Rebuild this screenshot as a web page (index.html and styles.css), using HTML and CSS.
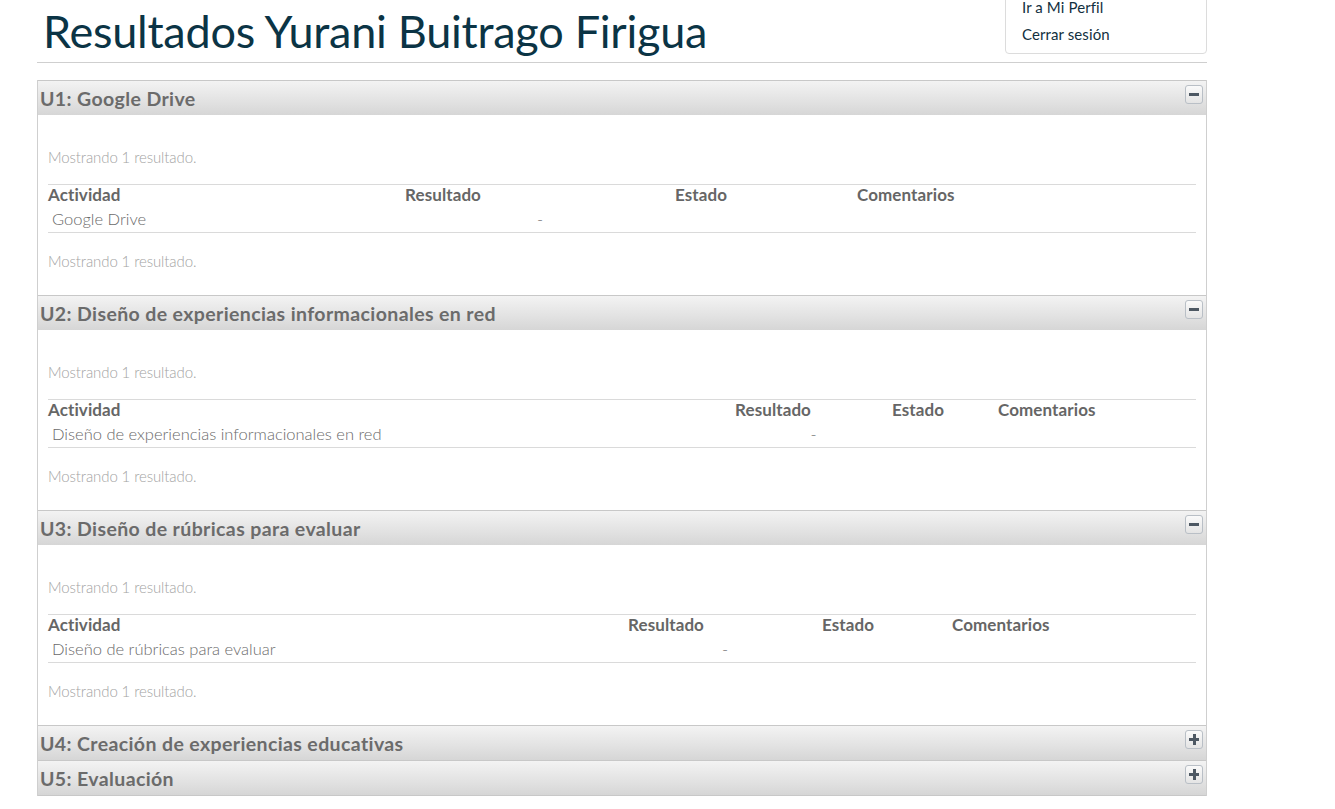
FILE: index.html
```html
<!DOCTYPE html>
<html lang="es">
<head>
<meta charset="utf-8">
<title>Resultados</title>
<link rel="stylesheet" href="styles.css">
</head>
<body>
<div class="page">
  <div class="user-menu">
    <a href="#" class="menu-item">Ir a Mi Perfil</a>
    <a href="#" class="menu-item">Cerrar sesión</a>
  </div>
  <h1 class="title">Resultados Yurani Buitrago Firigua</h1>

  <div class="accordion">
    <section class="panel">
      <div class="panel-head"><span class="panel-title">U1: Google Drive</span><span class="toggle minus"></span></div>
      <div class="panel-body">
        <p class="summary">Mostrando 1 resultado.</p>
        <table class="grid g1">
          <thead><tr><th class="c1">Actividad</th><th class="c2">Resultado</th><th class="c3">Estado</th><th class="c4">Comentarios</th></tr></thead>
          <tbody><tr><td class="act">Google Drive</td><td class="res">-</td><td></td><td></td></tr></tbody>
        </table>
        <p class="summary after">Mostrando 1 resultado.</p>
      </div>
    </section>

    <section class="panel">
      <div class="panel-head"><span class="panel-title">U2: Diseño de experiencias informacionales en red</span><span class="toggle minus"></span></div>
      <div class="panel-body">
        <p class="summary">Mostrando 1 resultado.</p>
        <table class="grid g2">
          <thead><tr><th class="c1">Actividad</th><th class="c2">Resultado</th><th class="c3">Estado</th><th class="c4">Comentarios</th></tr></thead>
          <tbody><tr><td class="act">Diseño de experiencias informacionales en red</td><td class="res">-</td><td></td><td></td></tr></tbody>
        </table>
        <p class="summary after">Mostrando 1 resultado.</p>
      </div>
    </section>

    <section class="panel">
      <div class="panel-head"><span class="panel-title">U3: Diseño de rúbricas para evaluar</span><span class="toggle minus"></span></div>
      <div class="panel-body">
        <p class="summary">Mostrando 1 resultado.</p>
        <table class="grid g3">
          <thead><tr><th class="c1">Actividad</th><th class="c2">Resultado</th><th class="c3">Estado</th><th class="c4">Comentarios</th></tr></thead>
          <tbody><tr><td class="act">Diseño de rúbricas para evaluar</td><td class="res">-</td><td></td><td></td></tr></tbody>
        </table>
        <p class="summary after">Mostrando 1 resultado.</p>
      </div>
    </section>

    <section class="panel">
      <div class="panel-head"><span class="panel-title">U4: Creación de experiencias educativas</span><span class="toggle plus"></span></div>
    </section>

    <section class="panel last">
      <div class="panel-head"><span class="panel-title">U5: Evaluación</span><span class="toggle plus"></span></div>
    </section>
  </div>
</div>
</body>
</html>
```
FILE: styles.css
```css
html, body {
  margin: 0;
  padding: 0;
  background: #fff;
}
body {
  font-family: "Lato", "Open Sans", "Liberation Sans", sans-serif;
  color: #666;
}
.page {
  position: relative;
  width: 1170px;
  margin-left: 37px;
}
.title {
  display: flex;
  align-items: flex-start;
  margin: 0 0 17px 0;
  padding: 9px 0 0 6px;
  height: 63px;
  box-sizing: border-box;
  border-bottom: 1px solid #cfcfcf;
  font-size: 45px;
  font-weight: 400;
  line-height: 1;
  color: #0b3445;
  letter-spacing: -0.25px;
}

.user-menu {
  position: absolute;
  top: -10px;
  right: 0;
  width: 202px;
  height: 64px;
  box-sizing: border-box;
  border: 1px solid #dcdcdc;
  border-radius: 0 0 4px 4px;
  background: #fff;
  padding: 3px 0 0 16px;
  display: flex;
  flex-direction: column;
}
.menu-item {
  font-size: 15px;
  line-height: 27px;
  color: #123040;
  text-decoration: none;
  letter-spacing: 0.1px;
}

.accordion {
  border-left: 1px solid #cfcfcf;
  border-right: 1px solid #cfcfcf;
}
.panel-head {
  height: 34px;
  border-top: 1px solid #c8c8c8;
  background: linear-gradient(to bottom, #f3f3f3 0%, #e2e2e2 60%, #d6d6d6 100%);
  display: flex;
  align-items: center;
  justify-content: space-between;
  padding: 0 3px 0 2px;
}
.panel.last {
  border-bottom: 1px solid #c8c8c8;
}
.panel-title {
  padding-top: 0;
  font-size: 19.5px;
  font-weight: 700;
  color: #6b6b6b;
  letter-spacing: 0.38px;
}
.toggle {
  position: relative;
  align-self: flex-start;
  margin-top: 4px;
  width: 16px;
  height: 17px;
  border: 1px solid #b9bfc6;
  border-radius: 3px;
  background: linear-gradient(to bottom, #fafafa, #e4e4e4);
}
.toggle::before {
  content: "";
  position: absolute;
  left: 3px;
  top: 7px;
  width: 10px;
  height: 3px;
  background: #4d5863;
}
.toggle.plus::after {
  content: "";
  position: absolute;
  left: 7px;
  top: 3px;
  width: 3px;
  height: 11px;
  background: #4d5863;
}

.panel-body {
  padding: 32px 10px 24px 10px;
  height: 180px;
  box-sizing: border-box;
}
.summary {
  margin: 0;
  font-size: 15px;
  line-height: 20px;
  font-weight: 300;
  color: #a3a3a3;
  letter-spacing: -0.1px;
}
.summary.after {
  margin-top: 18px;
}
.grid {
  width: 100%;
  margin-top: 17px;
  border-collapse: collapse;
  table-layout: fixed;
  border-top: 1px solid #dadada;
  border-bottom: 1px solid #dadada;
}
.grid th {
  text-align: left;
  padding: 0;
  height: 20px;
  font-size: 17px;
  font-weight: 700;
  color: #666;
  line-height: 20px;
  vertical-align: middle;
  letter-spacing: 0.1px;
}
.grid td {
  padding: 0;
  height: 27px;
  font-size: 16.5px;
  font-weight: 300;
  color: #6a6a6a;
  vertical-align: middle;
}
.grid td.act {
  padding-left: 4px;
}
.grid td.res {
  text-align: center;
}
.g1 .c1 { width: 357px; }
.g1 .c2 { width: 270px; }
.g1 .c3 { width: 182px; }
.g2 .c1 { width: 687px; }
.g2 .c2 { width: 157px; }
.g2 .c3 { width: 106px; }
.g3 .c1 { width: 580px; }
.g3 .c2 { width: 194px; }
.g3 .c3 { width: 130px; }
```
